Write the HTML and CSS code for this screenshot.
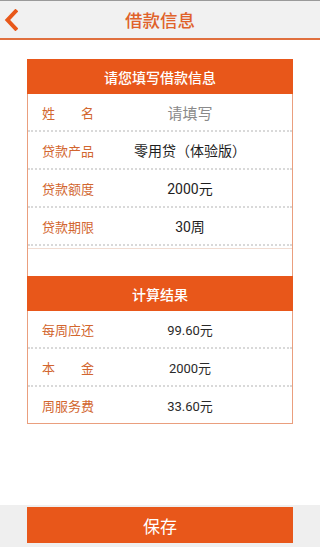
FILE: index.html
```html
<!DOCTYPE html>
<html lang="zh-CN">
<head>
<meta charset="utf-8">
<meta name="viewport" content="width=device-width, initial-scale=1">
<title>借款信息</title>
<link rel="stylesheet" href="styles.css">
</head>
<body>
<div class="app">
  <header class="topbar">
    <span class="back">
      <svg width="14" height="22" viewBox="0 0 14 22"><polyline points="11.5,2.5 3.5,11 11.5,19.5" fill="none" stroke="#e8581a" stroke-width="4" stroke-linecap="square" stroke-linejoin="miter"/></svg>
    </span>
    <h1 class="title">借款信息</h1>
  </header>
  <main class="content">
    <section class="card">
      <div class="card-head">请您填写借款信息</div>
      <div class="row">
        <span class="label">姓名</span>
        <span class="value placeholder">请填写</span>
      </div>
      <div class="row">
        <span class="label">贷款产品</span>
        <span class="value">零用贷（体验版）</span>
      </div>
      <div class="row">
        <span class="label">贷款额度</span>
        <span class="value">2000元</span>
      </div>
      <div class="row">
        <span class="label">贷款期限</span>
        <span class="value">30周</span>
      </div>
      <div class="spacer"></div>
      <div class="card-head">计算结果</div>
      <div class="row result">
        <span class="label">每周应还</span>
        <span class="value">99.60元</span>
      </div>
      <div class="row result">
        <span class="label">本金</span>
        <span class="value">2000元</span>
      </div>
      <div class="row result last">
        <span class="label">周服务费</span>
        <span class="value">33.60元</span>
      </div>
    </section>
  </main>
  <footer class="bottombar">
    <button class="save">保存</button>
  </footer>
</div>
</body>
</html>
```
FILE: styles.css
```css
html, body {
  margin: 0;
  padding: 0;
  background: #ffffff;
}
body {
  font-family: "Roboto", "Noto Sans CJK SC", sans-serif;
}
.app {
  height: 547px;
  display: flex;
  flex-direction: column;
}
.topbar {
  height: 37px;
  border-top: 1px solid #9a9a9a;
  border-bottom: 2px solid #e0703e;
  background: #f1f1f1;
  display: flex;
  align-items: center;
  justify-content: center;
  position: relative;
  flex: none;
}
.back {
  position: absolute;
  left: 4px;
  top: 8px;
  display: flex;
}
.title {
  margin: 0;
  font-family: "Noto Sans CJK SC", sans-serif;
  font-size: 17.5px;
  font-weight: 500;
  color: #e0622a;
  line-height: 1;
}
.content {
  flex: 1;
  padding-top: 19px;
}
.card {
  width: 264px;
  margin: 0 auto;
  border: 1px solid #ea9f7e;
  border-top: none;
}
.card-head {
  height: 35px;
  background: #e8571a;
  color: #ffffff;
  font-family: "Noto Sans CJK SC", sans-serif;
  font-size: 14px;
  font-weight: 500;
  display: flex;
  align-items: center;
  justify-content: center;
  margin: 0 -1px;
}
.row {
  height: 36px;
  border-bottom: 2px dotted #d9d9d9;
  display: flex;
  align-items: center;
  padding: 0 6px 0 14px;
}
.row.last {
  border-bottom: none;
  height: 36px;
}
.label {
  width: 52px;
  font-family: "Noto Sans CJK SC", sans-serif;
  font-size: 13px;
  color: #d2662f;
  text-align: justify;
  text-align-last: justify;
  white-space: nowrap;
}
.value {
  flex: 1;
  text-align: center;
  font-size: 14px;
  color: #1e1e1e;
}
.value.placeholder {
  font-size: 15px;
  color: #8a8a8a;
}
.result .value {
  font-size: 13px;
  color: #2a2a2a;
}
.spacer {
  height: 27px;
  border-top: 1px solid #f0dcd2;
  margin-top: 2px;
}
.bottombar {
  flex: none;
  height: 42px;
  background: #efefef;
  display: flex;
  justify-content: center;
  padding-top: 2px;
  box-sizing: border-box;
}
.save {
  width: 266px;
  height: 36px;
  border: none;
  border-radius: 0;
  background: #e8571a;
  color: #ffffff;
  font-family: "Noto Sans CJK SC", sans-serif;
  font-size: 17px;
  padding: 0;
  cursor: pointer;
}
```
